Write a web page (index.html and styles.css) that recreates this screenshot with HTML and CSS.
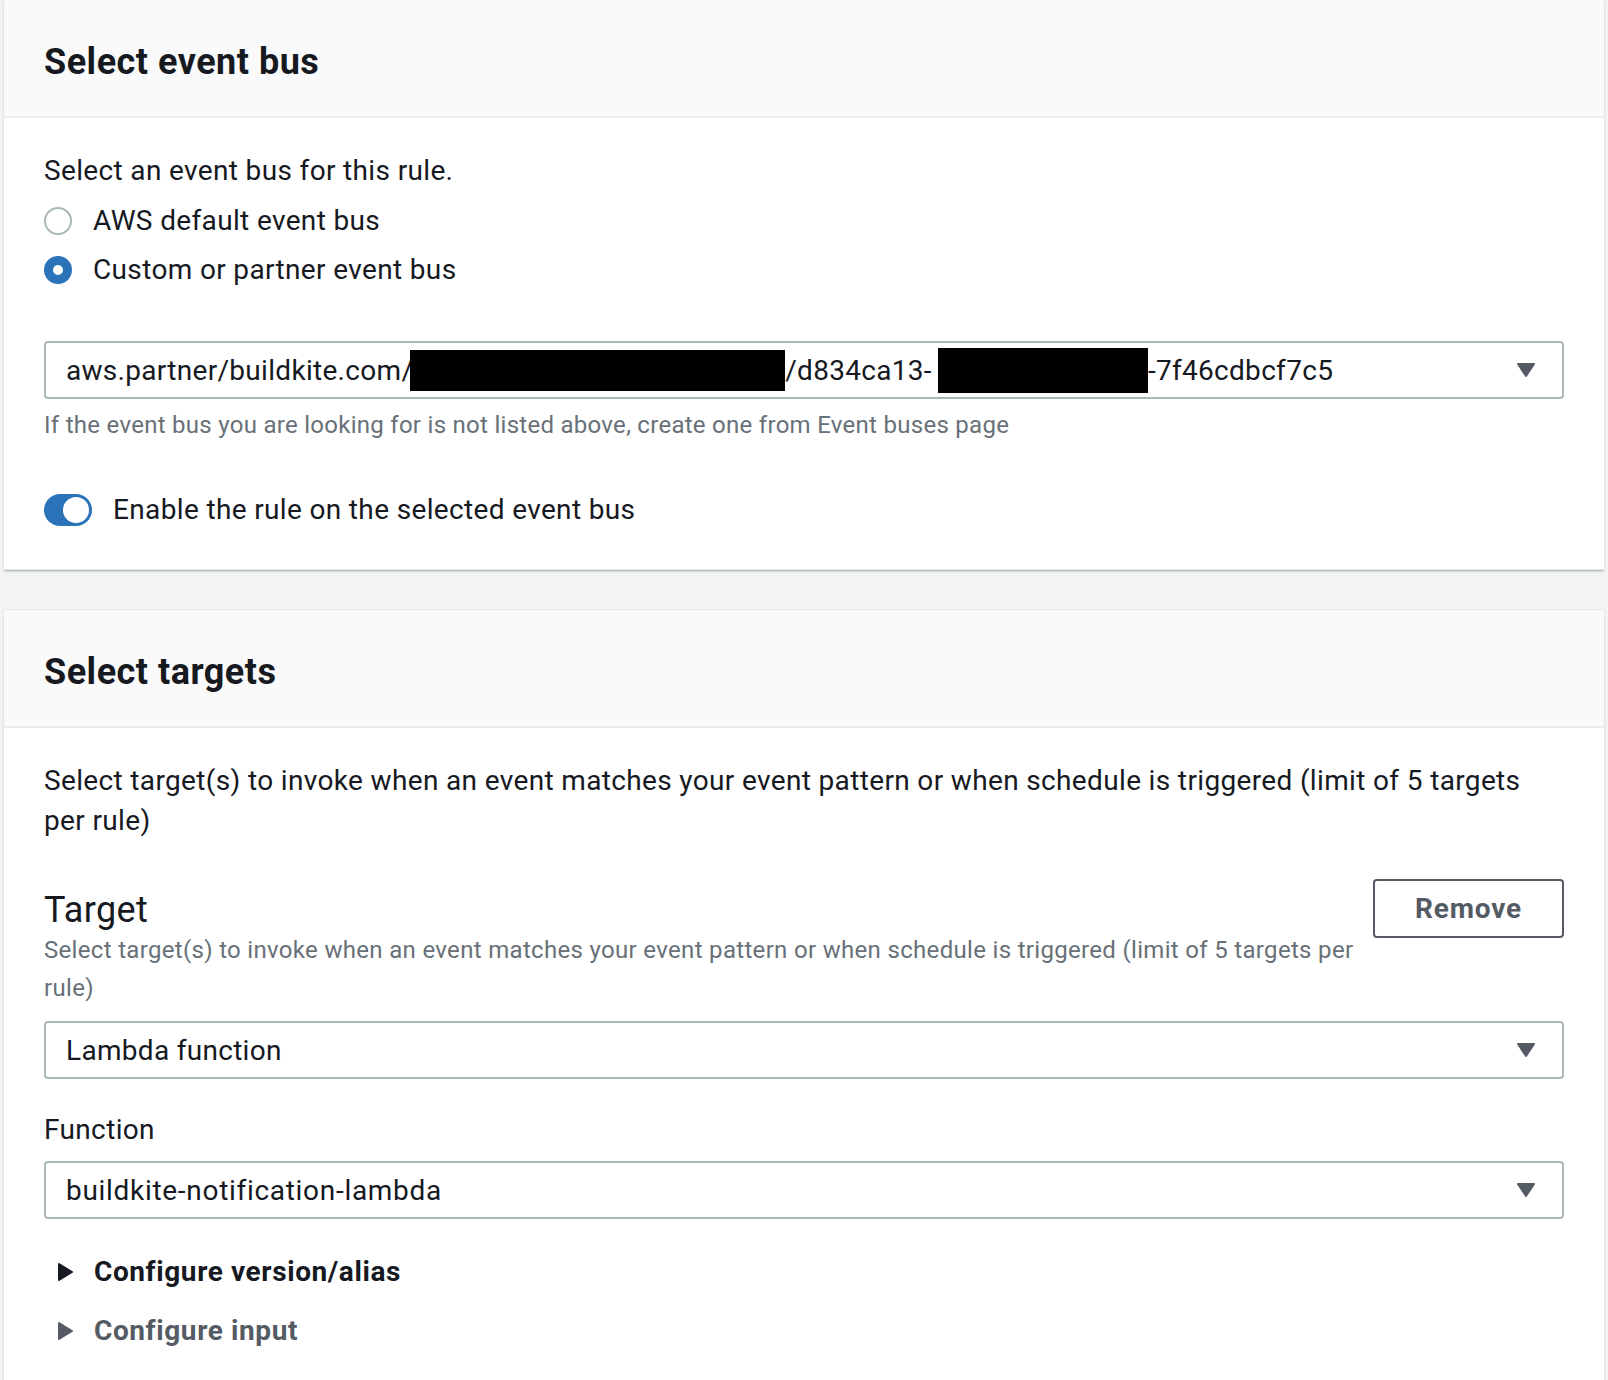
FILE: index.html
```html
<!DOCTYPE html>
<html lang="en">
<head>
<meta charset="utf-8">
<title>Select event bus</title>
<link rel="stylesheet" href="styles.css">
</head>
<body>
<div class="page">
  <section class="card">
    <div class="card-header"><h2 class="card-title">Select event bus</h2></div>
    <div class="card-body">
      <p class="lead">Select an event bus for this rule.</p>
      <div class="radio-group">
        <label class="radio"><span class="radio-ctl"></span><span>AWS default event bus</span></label>
        <label class="radio"><span class="radio-ctl checked"></span><span>Custom or partner event bus</span></label>
      </div>
      <div class="field-bus">
        <div class="select">
          <span class="select-value"><span>aws.partner/buildkite.com/</span><span class="redact redact-1"></span><span>/d834ca13-</span><span class="redact redact-2"></span><span>-7f46cdbcf7c5</span></span>
          <svg class="caret" width="20" height="16" viewBox="0 0 20 16"><path d="M2 2h16l-8 12z" fill="#545b64" stroke="#545b64" stroke-width="2" stroke-linejoin="round"/></svg>
        </div>
        <p class="hint">If the event bus you are looking for is not listed above, create one from Event buses page</p>
      </div>
      <div class="toggle-row"><span class="toggle"><span class="knob"></span></span><span>Enable the rule on the selected event bus</span></div>
    </div>
  </section>

  <section class="card card-targets">
    <div class="card-header"><h2 class="card-title">Select targets</h2></div>
    <div class="card-body">
      <p class="lead lead-wrap">Select target(s) to invoke when an event matches your event pattern or when schedule is triggered (limit of 5 targets per rule)</p>
      <div class="target-head">
        <div class="target-text">
          <h3 class="target-title">Target</h3>
          <p class="target-desc">Select target(s) to invoke when an event matches your event pattern or when schedule is triggered (limit of 5 targets per rule)</p>
        </div>
        <button class="btn">Remove</button>
      </div>
      <div class="select select-target">
        <span class="select-value">Lambda function</span>
        <svg class="caret" width="20" height="16" viewBox="0 0 20 16"><path d="M2 2h16l-8 12z" fill="#545b64" stroke="#545b64" stroke-width="2" stroke-linejoin="round"/></svg>
      </div>
      <p class="label">Function</p>
      <div class="select select-fn">
        <span class="select-value fn-value">buildkite-notification-lambda</span>
        <svg class="caret" width="20" height="16" viewBox="0 0 20 16"><path d="M2 2h16l-8 12z" fill="#545b64" stroke="#545b64" stroke-width="2" stroke-linejoin="round"/></svg>
      </div>
      <div class="expander expander-1">
        <svg width="18" height="20" viewBox="0 0 18 20"><path d="M2 2v16l13-8z" fill="#16191f" stroke="#16191f" stroke-width="2" stroke-linejoin="round"/></svg>
        <span>Configure version/alias</span>
      </div>
      <div class="expander expander-2">
        <svg width="18" height="20" viewBox="0 0 18 20"><path d="M2 2v16l13-8z" fill="#545b64" stroke="#545b64" stroke-width="2" stroke-linejoin="round"/></svg>
        <span>Configure input</span>
      </div>
    </div>
  </section>
</div>
</body>
</html>
```

FILE: styles.css
```css
html, body {
  margin: 0;
  padding: 0;
}
body {
  background: #f2f3f3;
  font-family: Roboto, "Liberation Sans", Arial, sans-serif;
  color: #16191f;
  letter-spacing: 0.35px;
}
.page {
  padding: 0 4px;
}
.card {
  background: #fff;
  box-shadow: 0 0 0 1px #e4e7e7, 0 2px 2px 0 rgba(0, 28, 36, 0.35);
}
.card + .card {
  margin-top: 41px;
}
.card-header {
  background: #fafafa;
  border-bottom: 2px solid #eaeded;
  padding: 40px 40px 32px;
}
.card-title {
  margin: 0;
  font-size: 36px;
  line-height: 44px;
  font-weight: 700;
  letter-spacing: 0.5px;
}
.card-body {
  padding: 33px 40px 37px;
}
.card-targets .card-body {
  padding-bottom: 40px;
}
.lead {
  margin: 0;
  font-size: 28px;
  line-height: 40px;
}
.lead-wrap {
  max-width: 1500px;
}
.radio-group {
  margin-top: 8px;
  display: flex;
  flex-direction: column;
  gap: 5px;
}
.radio {
  display: flex;
  align-items: center;
  gap: 21px;
  font-size: 28px;
  line-height: 44px;
}
.radio-ctl {
  width: 28px;
  height: 28px;
  box-sizing: border-box;
  border-radius: 50%;
  border: 2px solid #aab7b8;
  background: #fff;
  flex: none;
}
.radio-ctl.checked {
  border: 9px solid #2b73b9;
}
.field-bus {
  margin-top: 49px;
}
.select {
  height: 58px;
  box-sizing: border-box;
  border: 2px solid #aab7b8;
  border-radius: 4px;
  display: flex;
  align-items: center;
  justify-content: space-between;
  padding: 0 26px 0 20px;
  font-size: 28px;
  background: #fff;
}
.select-value {
  display: flex;
  align-items: center;
  white-space: nowrap;
  letter-spacing: 0.3px;
}
.fn-value {
  letter-spacing: 0.7px;
}
.caret {
  flex: none;
  display: block;
}
.redact {
  display: inline-block;
  background: #000;
}
.redact-1 {
  width: 375px;
  height: 41px;
  margin-left: -3px;
}
.redact-2 {
  width: 210px;
  height: 45px;
  margin-left: 6px;
}
.hint {
  margin: 10px 0 0;
  font-size: 24px;
  line-height: 32px;
  color: #687078;
  letter-spacing: 0.28px;
}
.toggle-row {
  margin-top: 47px;
  display: flex;
  align-items: center;
  gap: 21px;
  font-size: 28px;
  line-height: 44px;
}
.toggle {
  position: relative;
  width: 48px;
  height: 32px;
  border-radius: 16px;
  background: #2b73b9;
  flex: none;
}
.knob {
  position: absolute;
  right: 3px;
  top: 3px;
  width: 26px;
  height: 26px;
  border-radius: 50%;
  background: #fff;
}
.target-head {
  margin-top: 38px;
  display: flex;
  gap: 12px;
  align-items: flex-start;
}
.target-text {
  flex: 1;
  padding-top: 10px;
}
.target-title {
  margin: 0;
  font-size: 36px;
  line-height: 42px;
  font-weight: 400;
}
.target-desc {
  margin: 0;
  font-size: 24px;
  line-height: 38px;
  color: #687078;
  letter-spacing: 0.32px;
}
.btn {
  flex: none;
  width: 191px;
  height: 59px;
  box-sizing: border-box;
  border: 2px solid #545b64;
  border-radius: 4px;
  background: #fff;
  color: #545b64;
  font-family: Roboto, "Liberation Sans", Arial, sans-serif;
  font-size: 28px;
  font-weight: 700;
  letter-spacing: 0.8px;
  padding: 0;
}
.select-target {
  margin-top: 14px;
}
.label {
  margin: 31px 0 0;
  font-size: 28px;
  line-height: 40px;
}
.select-fn {
  margin-top: 11px;
}
.expander {
  display: flex;
  align-items: center;
  gap: 19px;
  padding-left: 13px;
  font-size: 28px;
  line-height: 44px;
  font-weight: 700;
  letter-spacing: 0.6px;
}
.expander svg {
  display: block;
  flex: none;
}
.expander-1 {
  margin-top: 31px;
}
.expander-2 {
  margin-top: 15px;
  color: #545b64;
}
```
